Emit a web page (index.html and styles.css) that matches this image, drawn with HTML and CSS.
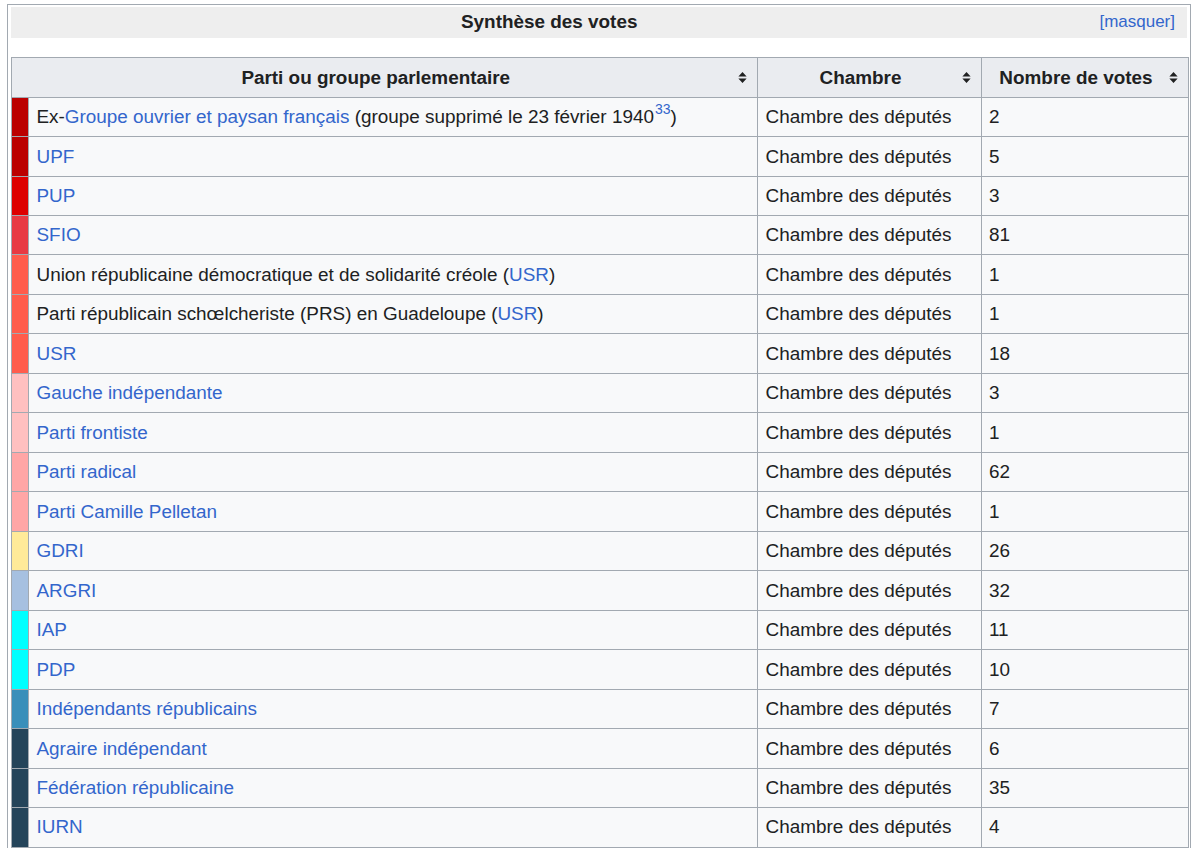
FILE: index.html
```html
<!DOCTYPE html>
<html lang="fr">
<head>
<meta charset="utf-8">
<title>Synthèse des votes</title>
<link rel="stylesheet" href="styles.css">
</head>
<body>
<div class="navframe">
  <div class="navhead">
    <div class="navtitle">Synthèse des votes</div>
    <a class="toggle" href="#">[masquer]</a>
  </div>
  <div class="navcontent">
    <table class="wikitable">
      <thead>
        <tr>
          <th colspan="2"><span class="th-in"><span class="th-label">Parti ou groupe parlementaire</span><svg class="sort" viewBox="0 0 9 12"><path d="M4.5 0L9 5H0z M4.5 12L0 7h9z"/></svg></span></th>
          <th class="col-ch"><span class="th-in"><span class="th-label">Chambre</span><svg class="sort" viewBox="0 0 9 12"><path d="M4.5 0L9 5H0z M4.5 12L0 7h9z"/></svg></span></th>
          <th class="col-nb"><span class="th-in"><span class="th-label">Nombre de votes</span><svg class="sort" viewBox="0 0 9 12"><path d="M4.5 0L9 5H0z M4.5 12L0 7h9z"/></svg></span></th>
        </tr>
      </thead>
      <tbody>
        <tr><td class="sw c-rouge"></td><td>Ex-<a href="#">Groupe ouvrier et paysan français</a> (groupe supprimé le 23 février 1940<sup><a href="#">33</a></sup>)</td><td>Chambre des députés</td><td>2</td></tr>
        <tr><td class="sw c-rouge"></td><td><a href="#">UPF</a></td><td>Chambre des députés</td><td>5</td></tr>
        <tr><td class="sw c-pup"></td><td><a href="#">PUP</a></td><td>Chambre des députés</td><td>3</td></tr>
        <tr><td class="sw c-sfio"></td><td><a href="#">SFIO</a></td><td>Chambre des députés</td><td>81</td></tr>
        <tr><td class="sw c-usr"></td><td>Union républicaine démocratique et de solidarité créole (<a href="#">USR</a>)</td><td>Chambre des députés</td><td>1</td></tr>
        <tr><td class="sw c-usr"></td><td>Parti républicain schœlcheriste (PRS) en Guadeloupe (<a href="#">USR</a>)</td><td>Chambre des députés</td><td>1</td></tr>
        <tr><td class="sw c-usr"></td><td><a href="#">USR</a></td><td>Chambre des députés</td><td>18</td></tr>
        <tr><td class="sw c-gi"></td><td><a href="#">Gauche indépendante</a></td><td>Chambre des députés</td><td>3</td></tr>
        <tr><td class="sw c-gi"></td><td><a href="#">Parti frontiste</a></td><td>Chambre des députés</td><td>1</td></tr>
        <tr><td class="sw c-rad"></td><td><a href="#">Parti radical</a></td><td>Chambre des députés</td><td>62</td></tr>
        <tr><td class="sw c-rad"></td><td><a href="#">Parti Camille Pelletan</a></td><td>Chambre des députés</td><td>1</td></tr>
        <tr><td class="sw c-gdri"></td><td><a href="#">GDRI</a></td><td>Chambre des députés</td><td>26</td></tr>
        <tr><td class="sw c-argri"></td><td><a href="#">ARGRI</a></td><td>Chambre des députés</td><td>32</td></tr>
        <tr><td class="sw c-cyan"></td><td><a href="#">IAP</a></td><td>Chambre des députés</td><td>11</td></tr>
        <tr><td class="sw c-cyan"></td><td><a href="#">PDP</a></td><td>Chambre des députés</td><td>10</td></tr>
        <tr><td class="sw c-ir"></td><td><a href="#">Indépendants républicains</a></td><td>Chambre des députés</td><td>7</td></tr>
        <tr><td class="sw c-dark"></td><td><a href="#">Agraire indépendant</a></td><td>Chambre des députés</td><td>6</td></tr>
        <tr><td class="sw c-dark"></td><td><a href="#">Fédération républicaine</a></td><td>Chambre des députés</td><td>35</td></tr>
        <tr><td class="sw c-dark"></td><td><a href="#">IURN</a></td><td>Chambre des députés</td><td>4</td></tr>
      </tbody>
    </table>
  </div>
</div>
</body>
</html>
```
FILE: styles.css
```css
html, body {
  margin: 0;
  padding: 0;
  background: #ffffff;
}

body {
  font-family: "Liberation Sans", Arial, sans-serif;
  font-size: 18.9px;
  color: #202122;
  padding: 4px 0 0 7px;
}

a {
  color: #3366cc;
  text-decoration: none;
}

.navframe {
  box-sizing: border-box;
  width: 1184px;
  border: 1px solid #a2a9b1;
  padding: 2px 1px 0 3px;
}

.navhead {
  display: flex;
  align-items: center;
  background: #eeeeee;
  height: 31px;
  margin-right: 2px;
}

.navtitle {
  flex: 1;
  text-align: center;
  font-weight: bold;
  padding-right: 12px;
  padding-bottom: 1px;
}

.toggle {
  padding: 0 12px 2px 0;
  font-size: 17px;
}

.navcontent {
  padding-top: 19px;
}

.wikitable {
  width: 100%;
  border-collapse: collapse;
  background: #f8f9fa;
  border: 1px solid #a2a9b1;
}

.wikitable th,
.wikitable td {
  border: 1px solid #a2a9b1;
  padding: 6.45px 7.5px;
  line-height: 25.6px;
  text-align: left;
  vertical-align: middle;
}

.wikitable th {
  background: #eaecf0;
  font-weight: bold;
  text-align: center;
  padding: 6.5px 10px 6.5px 7.5px;
}

.th-in {
  display: flex;
  align-items: center;
}

.th-label {
  flex: 1;
  text-align: center;
}

.sort {
  width: 9px;
  height: 11px;
  fill: #202122;
  margin-left: 6px;
}

.col-ch {
  width: 205px;
}

.col-nb {
  width: 189px;
}

.wikitable td.sw {
  width: 16px;
  padding: 0;
}

sup {
  font-size: 14px;
  line-height: 0;
  vertical-align: 0.65em;
  margin-left: 1px;
}

.c-rouge { background: #bb0000; }
.c-pup { background: #dd0000; }
.c-sfio { background: #e83a43; }
.c-usr { background: #ff5c4c; }
.c-gi { background: #ffc0c0; }
.c-rad { background: #ffa6a6; }
.c-gdri { background: #ffea99; }
.c-argri { background: #a6c0e0; }
.c-cyan { background: #00ffff; }
.c-ir { background: #3a8fba; }
.c-dark { background: #24445a; }
```
